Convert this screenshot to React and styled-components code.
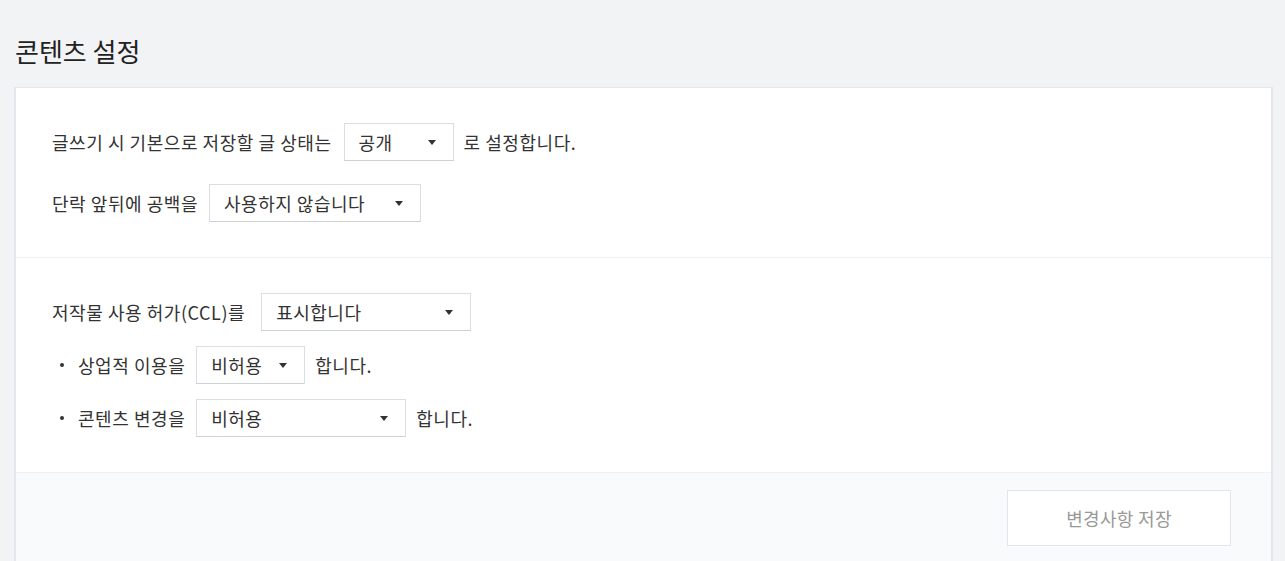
import React from "react";
import styled, { createGlobalStyle } from "styled-components";

const Global = createGlobalStyle`
  html, body { margin: 0; padding: 0; background: #f2f3f5; }
  body { font-family: "Noto Sans CJK KR", "Noto Sans", sans-serif; color: #333; }
  * { box-sizing: border-box; }
`;

const Page = styled.div`
  padding: 29px 12px 0 14px;
  height: 561px;
  overflow: hidden;
`;

const Title = styled.h2`
  margin: 0 0 15px 1px;
  font-size: 26px;
  font-weight: 400;
  line-height: 43px;
  color: #222;
  letter-spacing: 0;
`;

const Card = styled.div`
  background: #fff;
  border: 1px solid #e3e6ec;
  border-left-width: 2px;
  border-right-width: 2px;
`;

const Section = styled.div`
  padding: 35px 36px;
  display: flex;
  flex-direction: column;
  gap: ${(p) => p.$gap}px;
  border-top: ${(p) => (p.$divider ? "1px solid #eef0f3" : "none")};
`;

const Row = styled.div`
  display: flex;
  align-items: center;
  height: 38px;
  font-size: 18px;
  color: #333;
  padding-left: ${(p) => (p.$bullet ? "8px" : "0")};
`;

const Bullet = styled.span`
  width: 4px;
  height: 4px;
  border-radius: 50%;
  background: #333;
  margin-right: 14px;
`;

const Text = styled.span`
  white-space: nowrap;
  letter-spacing: 0.55px;
`;

const Select = styled.div`
  width: ${(p) => p.$w}px;
  height: 38px;
  margin: 0 ${(p) => p.$mr ?? 10}px 0 ${(p) => p.$ml ?? 11}px;
  border: 1px solid #dadde3;
  border-bottom-color: #ccd0d7;
  background: #fff;
  display: flex;
  align-items: center;
  justify-content: space-between;
  padding: 0 17px 0 14px;
  font-size: 18px;
  letter-spacing: 0.5px;
  color: #333;
`;

const Caret = styled.span`
  width: 0;
  height: 0;
  border-left: 4px solid transparent;
  border-right: 4px solid transparent;
  border-top: 5px solid #333;
`;

const Footer = styled.div`
  background: #f9fafb;
  border-top: 1px solid #eef0f3;
  padding: 17px 40px 30px;
  display: flex;
  justify-content: flex-end;
`;

const SaveButton = styled.button`
  width: 224px;
  height: 56px;
  background: #fff;
  border: 1px solid #e3e6ec;
  color: #999;
  font-family: inherit;
  font-size: 18px;
  letter-spacing: 0.3px;
  cursor: default;
`;

const Dropdown = ({ value, w, ml, mr }) => (
  <Select $w={w} $ml={ml} $mr={mr}>
    <span>{value}</span>
    <Caret />
  </Select>
);

export default function App() {
  return (
    <>
      <Global />
      <Page>
        <Title>콘텐츠 설정</Title>
        <Card>
          <Section $gap={23}>
            <Row>
              <Text>글쓰기 시 기본으로 저장할 글 상태는</Text>
              <Dropdown value="공개" w={110} ml={12} />
              <Text>로 설정합니다.</Text>
            </Row>
            <Row>
              <Text>단락 앞뒤에 공백을</Text>
              <Dropdown value="사용하지 않습니다" w={212} />
            </Row>
          </Section>
          <Section $gap={15} $divider>
            <Row>
              <Text>저작물 사용 허가(CCL)를</Text>
              <Dropdown value="표시합니다" w={210} ml={16} />
            </Row>
            <Row $bullet>
              <Bullet />
              <Text>상업적 이용을</Text>
              <Dropdown value="비허용" w={109} />
              <Text>합니다.</Text>
            </Row>
            <Row $bullet>
              <Bullet />
              <Text>콘텐츠 변경을</Text>
              <Dropdown value="비허용" w={210} />
              <Text>합니다.</Text>
            </Row>
          </Section>
          <Footer>
            <SaveButton>변경사항 저장</SaveButton>
          </Footer>
        </Card>
      </Page>
    </>
  );
}
